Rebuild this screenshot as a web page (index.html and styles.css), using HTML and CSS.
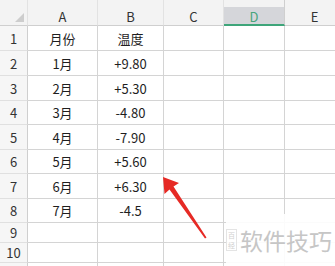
FILE: index.html
```html
<!DOCTYPE html>
<html lang="zh">
<head>
  <meta charset="UTF-8">
  <title>月份温度</title>
  <link rel="stylesheet" href="styles.css">
</head>
<body>
  <div class="wrap">
    <!-- 表格 -->
    <div class="sheet">
      <div class="hd corner"><span class="tri"></span></div>
      <div class="hd col">A</div>
      <div class="hd col">B</div>
      <div class="hd col">C</div>
      <div class="hd col active">D</div>
      <div class="hd col last">E</div>

      <div class="rn">1</div><div class="c">月份</div><div class="c">温度</div><div class="c"></div><div class="c"></div><div class="c"></div>
      <div class="rn">2</div><div class="c">1月</div><div class="c">+9.80</div><div class="c"></div><div class="c"></div><div class="c"></div>
      <div class="rn">3</div><div class="c">2月</div><div class="c">+5.30</div><div class="c"></div><div class="c"></div><div class="c"></div>
      <div class="rn">4</div><div class="c">3月</div><div class="c">-4.80</div><div class="c"></div><div class="c"></div><div class="c"></div>
      <div class="rn">5</div><div class="c">4月</div><div class="c">-7.90</div><div class="c"></div><div class="c"></div><div class="c"></div>
      <div class="rn">6</div><div class="c">5月</div><div class="c">+5.60</div><div class="c"></div><div class="c"></div><div class="c"></div>
      <div class="rn">7</div><div class="c">6月</div><div class="c">+6.30</div><div class="c"></div><div class="c"></div><div class="c"></div>
      <div class="rn">8</div><div class="c">7月</div><div class="c">-4.5</div><div class="c"></div><div class="c"></div><div class="c"></div>
      <div class="rn">9</div><div class="c"></div><div class="c"></div><div class="c"></div><div class="c"></div><div class="c"></div>
      <div class="rn">10</div><div class="c"></div><div class="c"></div><div class="c"></div><div class="c"></div><div class="c"></div>
      <div class="rn"></div><div class="c"></div><div class="c"></div><div class="c"></div><div class="c"></div><div class="c"></div>
    </div>

    <!-- 红色箭头 -->
    <svg class="arrow" width="60" height="70" viewBox="155 172 60 70">
      <polygon fill="#e62a25" points="163,177 179,183 173.5,186.5 206.5,237.5 205,238.5 169.5,189.5 164.5,194"/>
    </svg>

    <!-- 水印 -->
    <div class="mark">
      <div class="logo"><span>百</span><span>经</span></div>
      <div class="mark-text">软件技巧</div>
    </div>
  </div>
</body>
</html>
```

FILE: styles.css
```css
body {
  margin: 0;
  background: #fff;
  font-family: "Noto Sans CJK SC", "Noto Sans", sans-serif;
  color: #222;
  overflow: hidden;
}
.wrap {
  position: relative;
  width: 335px;
  height: 266px;
  overflow: hidden;
}
.sheet {
  display: grid;
  grid-template-columns: 28px 70px 66px 60px 61px 60px;
  grid-template-rows: 26px 25px 25px 25px 24px 25px 24px 25px 24px 20px 20px 20px;
  background: #fff;
}
.sheet > div {
  box-sizing: border-box;
  border-right: 1px solid #d4d4d4;
  border-bottom: 1px solid #d4d4d4;
  display: flex;
  align-items: center;
  justify-content: center;
  font-size: 13px;
  line-height: 1;
}
/* 列标题 */
.hd {
  background: #f3f3f3;
  color: #333;
  padding-top: 8px;
  border-right-color: #e2e2e2 !important;
  border-bottom-color: #cfcfcf !important;
}
.hd.col {
  font-size: 13px;
}
.hd.active {
  background: linear-gradient(#f3f3f3 0, #f3f3f3 7px, #d5d6da 7px);
  color: #49a57c;
  border-bottom: 2px solid #3ea57a !important;
  border-right-color: #cfcfcf !important;
}
.corner {
  position: relative;
}
.tri {
  position: absolute;
  right: 3px;
  bottom: 3px;
  width: 0;
  height: 0;
  border-left: 9px solid transparent;
  border-bottom: 9px solid #cdcdcd;
}
/* 行号 */
.rn {
  background: #f6f6f6;
  color: #333;
  border-right-color: #cfcfcf !important;
  border-bottom-color: #e0e0e0 !important;
}
.c {
  color: #1e1e1e;
}
.arrow {
  position: absolute;
  left: 155px;
  top: 172px;
}
/* 水印 */
.mark {
  position: absolute;
  left: 226px;
  top: 214px;
  width: 109px;
  height: 52px;
  background: rgba(255, 255, 255, 0.9);
  display: flex;
  align-items: center;
  gap: 3px;
}
.logo {
  display: flex;
  flex-direction: column;
  gap: 2px;
  border: 1px solid #e4e4e4;
  padding: 1px;
}
.logo span {
  font-size: 7px;
  color: #d0d0d0;
  line-height: 1.2;
}
.mark-text {
  font-size: 23px;
  color: #c6c6c6;
  letter-spacing: 0;
  line-height: 1;
  white-space: nowrap;
}
```
